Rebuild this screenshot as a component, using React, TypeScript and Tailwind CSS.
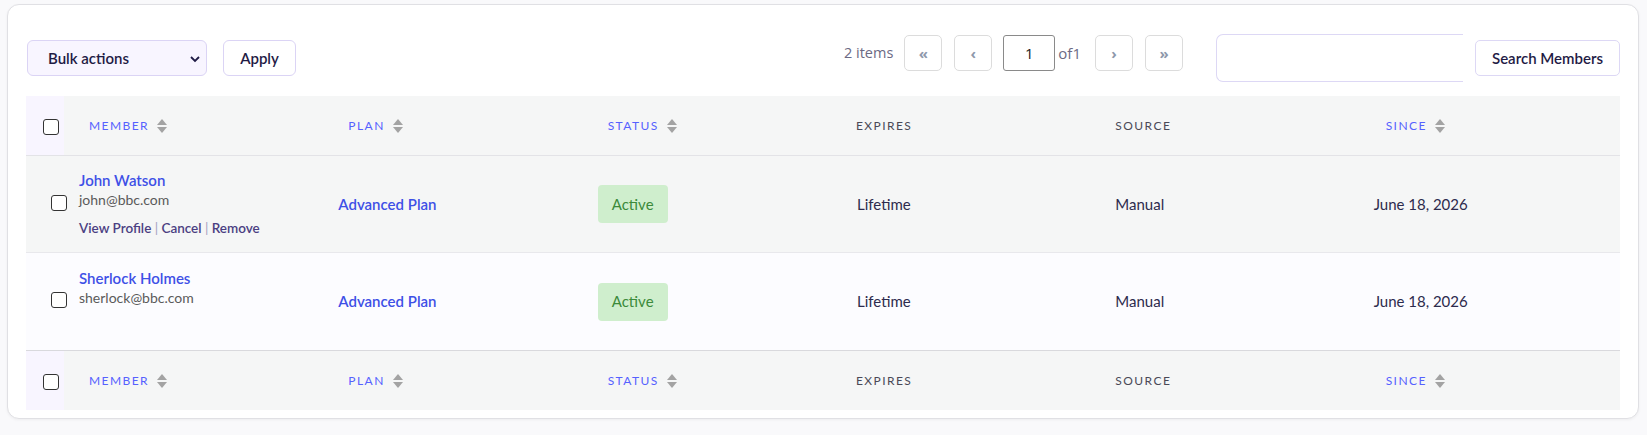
import React from 'react';

type Member = { name: string; email: string; hover: boolean };

const members: Member[] = [
  { name: 'John Watson', email: 'john@bbc.com', hover: true },
  { name: 'Sherlock Holmes', email: 'sherlock@bbc.com', hover: false },
];

function SortIcon() {
  return (
    <svg width="10" height="16" viewBox="0 0 10 16" className="ml-[8px] shrink-0">
      <path d="M5 1 L10 7 L0 7 Z" fill="#a3a3a3" />
      <path d="M0 9 L10 9 L5 15 Z" fill="#a3a3a3" />
    </svg>
  );
}

function Checkbox() {
  return <div className="w-[16px] h-[16px] rounded-[3px] border-[1.5px] border-[#333] bg-white shrink-0" />;
}

function HeaderRow({ footer }: { footer?: boolean }) {
  const sortable = (label: string) => (
    <div className="flex items-center pl-[25px] text-[12px] tracking-[0.12em] text-[#5661ff]">
      {label}
      <SortIcon />
    </div>
  );
  const plain = (label: string) => (
    <div className="flex items-center pl-[14px] text-[12px] tracking-[0.12em] text-[#4a4956]">{label}</div>
  );
  return (
    <div
      className={`grid grid-cols-[38px_repeat(6,1fr)] h-[60px] bg-[#f5f6f6] ${
        footer ? 'border-t border-[#d9d9dd]' : 'border-b border-[#e3e3e7]'
      }`}
    >
      <div className="flex items-center pl-[17px] bg-[#f8f5ff]">
        <div className="mt-[3px]">
          <Checkbox />
        </div>
      </div>
      {sortable('MEMBER')}
      {sortable('PLAN')}
      {sortable('STATUS')}
      {plain('EXPIRES')}
      {plain('SOURCE')}
      {sortable('SINCE')}
    </div>
  );
}

function Row({ m, index }: { m: Member; index: number }) {
  return (
    <div
      className={`grid grid-cols-[38px_repeat(6,1fr)] h-[97px] ${
        index === 0 ? 'bg-[#f5f6f6] border-b border-[#e8e8ec]' : 'bg-[#fcfcff]'
      }`}
    >
      <div className="relative flex items-center pl-[25px]">
        <div className="mt-[-3px]">
          <Checkbox />
        </div>
      </div>
      <div className="flex flex-col justify-center pl-[15px]">
        <div className="text-[15px] leading-[20px] font-semibold text-[#3e50e6]">{m.name}</div>
        <div className="text-[14px] leading-[20px] text-[#5a5a5a]">{m.email}</div>
        <div
          className={`mt-[8px] text-[13.5px] leading-[20px] font-semibold text-[#4b3f82] ${
            m.hover ? '' : 'invisible'
          }`}
        >
          View Profile <span className="font-normal text-[#a59fbf]">|</span> Cancel{' '}
          <span className="font-normal text-[#a59fbf]">|</span> Remove
        </div>
      </div>
      <div className="flex items-center pl-[15px] text-[15px] font-semibold text-[#3e50e6]">Advanced Plan</div>
      <div className="flex items-center pl-[15px]">
        <span className="flex items-center justify-center w-[70px] h-[38px] rounded-[4px] bg-[#cfeecd] text-[15px] text-[#3c8a3a]">
          Active
        </span>
      </div>
      <div className="flex items-center pl-[15px] text-[15px] text-[#2d2b4d]">Lifetime</div>
      <div className="flex items-center pl-[14px] text-[15px] text-[#2d2b4d]">Manual</div>
      <div className="flex items-center pl-[13px] text-[15px] text-[#2d2b4d]">June 18, 2026</div>
    </div>
  );
}

function PageBtn({ label }: { label: string }) {
  return (
    <button className="w-[38px] h-[36px] rounded-[5px] border border-[#dcdcdc] bg-white flex items-center justify-center text-[15px] font-bold text-[#8e98ab]">
      {label}
    </button>
  );
}

export default function App() {
  return (
    <div className="min-h-screen bg-[#f9f9fb] pt-[4px] pl-[7px] pr-[8px] font-['Lato',sans-serif]">
      <div className="bg-white border border-[#e0e0e4] rounded-[12px] shadow-[0_1px_3px_rgba(0,0,0,0.05)] pt-[29px] pb-[8px] px-[18px]">
        {/* Toolbar */}
        <div className="flex items-start h-[48px] mb-[14px]">
          <div className="flex items-center gap-[16px] mt-[6px] ml-[1px]">
            <div className="relative w-[180px] h-[36px] rounded-[6px] border border-[#dbd4f5] bg-[#f8f5ff] flex items-center pl-[20px] text-[15px] font-semibold text-[#1f1b45]">
              Bulk actions
              <svg width="10" height="7" viewBox="0 0 10 7" className="absolute right-[6px] top-[15px]">
                <path d="M1 1 L5 5 L9 1" stroke="#1f1b45" strokeWidth="1.8" fill="none" />
              </svg>
            </div>
            <button className="w-[73px] h-[36px] rounded-[6px] border border-[#dbd4f5] bg-white text-[15px] font-semibold text-[#1f1b45]">
              Apply
            </button>
          </div>

          <div className="ml-auto flex items-center mt-[1px] font-['Open_Sans',sans-serif]">
            <span className="text-[14.5px] text-[#6c6a84] mr-[11px]">2 items</span>
            <PageBtn label="«" />
            <div className="w-[12px]" />
            <PageBtn label="‹" />
            <input
              readOnly
              value="1"
              className="ml-[11px] w-[52px] h-[36px] rounded-[3px] border border-[#8a8a8a] text-center text-[15px] text-[#222] outline-none"
            />
            <span className="ml-[3px] text-[15px] text-[#6c6a84] mr-[14px]">of1</span>
            <PageBtn label="›" />
            <div className="w-[12px]" />
            <PageBtn label="»" />
          </div>

          <div className="flex items-start ml-[33px]">
            <input className="w-[247px] h-[48px] rounded-l-[7px] border border-r-0 border-[#ddd8f5] outline-none" />
            <button className="ml-[12px] mt-[6px] w-[145px] h-[36px] rounded-[5px] border border-[#ddd8f5] bg-white text-[15px] font-semibold text-[#1f1b45]">
              Search Members
            </button>
          </div>
        </div>

        {/* Table */}
        <div>
          <HeaderRow />
          {members.map((m, i) => (
            <Row key={m.email} m={m} index={i} />
          ))}
          <HeaderRow footer />
        </div>
      </div>
    </div>
  );
}
